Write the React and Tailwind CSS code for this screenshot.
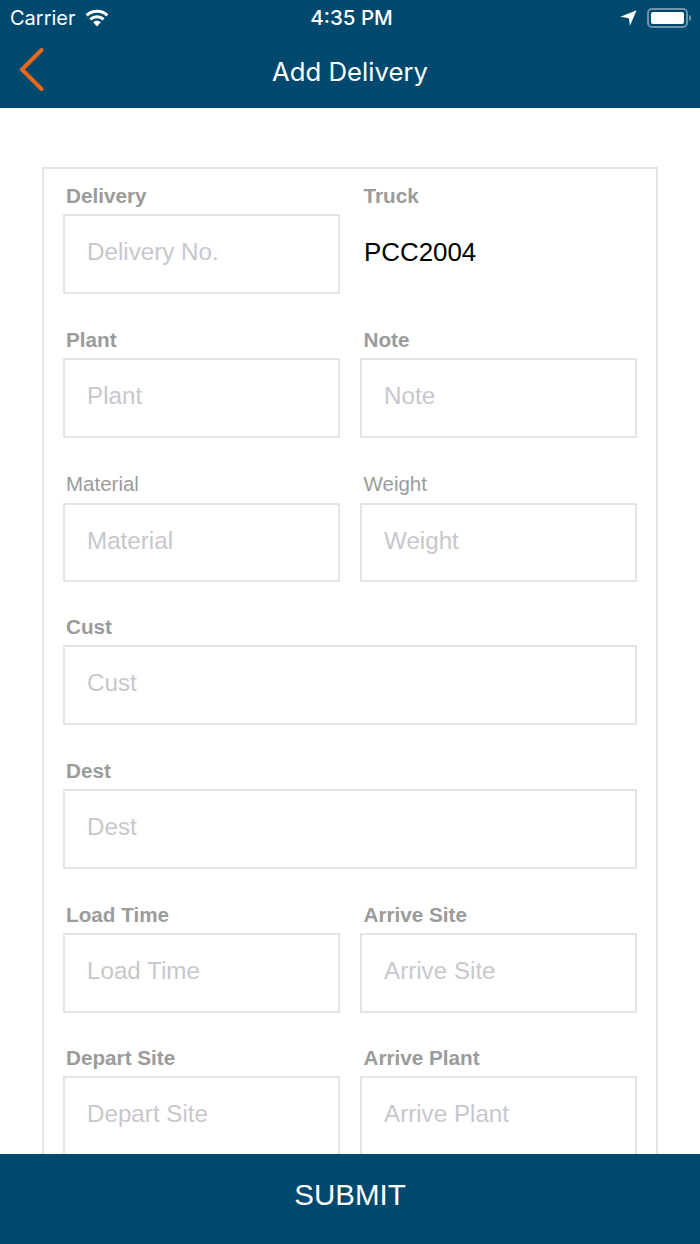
// Add Delivery form screen
import React from 'react';

const Field = ({ label, placeholder, light, short, right }) => (
  <div className="min-w-0">
    <div className={`h-[31px] text-[#9b9b9b] ${right ? 'pl-[3.5px]' : 'pl-[3px]'} ${light ? 'text-[20.5px] font-normal leading-[24px]' : 'text-[20.7px] font-bold leading-[26px]'}`}>
      {label}
    </div>
    <input
      readOnly
      placeholder={placeholder}
      className={`block w-full border-2 border-[#e4e4e4] bg-white pb-[4px] pl-[22px] text-[24.2px] outline-none placeholder:text-[#c7c7cd] ${short ? 'h-[79px]' : 'h-[80px]'}`}
    />
  </div>
);

const App = () => {
  return (
    <div className="flex h-[1244px] w-[700px] flex-col overflow-hidden bg-white font-['Liberation_Sans',sans-serif]">
      <header className="h-[108px] shrink-0 bg-[#00496e] text-white">
        <div className="flex h-[36px] items-center justify-between pl-[10px] pr-[9px] font-['Inter',sans-serif]">
          <div className="flex w-[200px] items-center gap-[9px] text-[20px]">
            <span>Carrier</span>
            <svg width="24" height="18" viewBox="0 0 24 18" fill="#fff">
              <path d="M12 17.5 8.2 13.3a5.6 5.6 0 0 1 7.6 0Z" />
              <path d="M6.4 11.4 4.4 9.2a11.2 11.2 0 0 1 15.2 0l-2 2.2a8.2 8.2 0 0 0-11.2 0Z" />
              <path d="M2.7 7.4.6 5.2a16.8 16.8 0 0 1 22.8 0l-2.1 2.2a13.8 13.8 0 0 0-18.6 0Z" />
            </svg>
          </div>
          <span className="pl-[2px] text-[20.5px] font-medium">4:35 PM</span>
          <div className="flex w-[200px] items-center justify-end gap-[10px]">
            <svg width="17" height="16" viewBox="0 0 17 16" fill="#fff">
              <path d="M16.6.2 10 15.8 8.8 8.2.4 6.8Z" />
            </svg>
            <div className="flex items-center gap-[1px]">
              <div className="h-[20px] w-[41px] rounded-[5px] border-2 border-[#6f93a8] p-[2px]">
                <div className="h-full w-full rounded-[2px] bg-white" />
              </div>
              <div className="h-[6px] w-[2px] rounded-r-sm bg-[#6f93a8]" />
            </div>
          </div>
        </div>
        <div className="relative flex h-[72px] items-center justify-center">
          <svg className="absolute left-[19px] top-[11px]" width="26" height="44" viewBox="0 0 26 44" fill="none">
            <path d="M22.5 3 3 22.5 22.5 42" stroke="#e8681c" strokeWidth="4" strokeLinecap="round" strokeLinejoin="round" />
          </svg>
          <h1 className="pt-[1px] font-['Inter',sans-serif] text-[25.7px] font-normal">Add Delivery</h1>
        </div>
      </header>

      <main className="min-h-0 flex-1 overflow-hidden px-[42px] pt-[59px]">
        <div className="border-2 border-[#e4e4e4] px-[19px] pt-[14px]">
          <div className="grid grid-cols-[277px_277px] gap-x-[20px]">
            <Field label="Delivery" placeholder="Delivery No." />
            <div>
              <div className="h-[31px] pl-[3.5px] text-[20.7px] font-bold leading-[26px] text-[#9b9b9b]">Truck</div>
              <div className="flex h-[80px] items-center pb-[4px] pl-[4px] text-[25.9px] text-black">PCC2004</div>
            </div>
          </div>
          <div className="mt-[33px] grid grid-cols-[277px_277px] gap-x-[20px]">
            <Field label="Plant" placeholder="Plant" />
            <Field label="Note" placeholder="Note" right />
          </div>
          <div className="mt-[34px] grid grid-cols-[277px_277px] gap-x-[20px]">
            <Field label="Material" placeholder="Material" light short />
            <Field label="Weight" placeholder="Weight" light short right />
          </div>
          <div className="mt-[32px]">
            <Field label="Cust" placeholder="Cust" />
          </div>
          <div className="mt-[33px]">
            <Field label="Dest" placeholder="Dest" />
          </div>
          <div className="mt-[33px] grid grid-cols-[277px_277px] gap-x-[20px]">
            <Field label="Load Time" placeholder="Load Time" />
            <Field label="Arrive Site" placeholder="Arrive Site" right />
          </div>
          <div className="mt-[32px] grid grid-cols-[277px_277px] gap-x-[20px]">
            <Field label="Depart Site" placeholder="Depart Site" />
            <Field label="Arrive Plant" placeholder="Arrive Plant" right />
          </div>
        </div>
      </main>

      <button className="h-[90px] shrink-0 bg-[#00496e] pb-[8px] text-[29.5px] text-white">SUBMIT</button>
    </div>
  );
};

export default App;
